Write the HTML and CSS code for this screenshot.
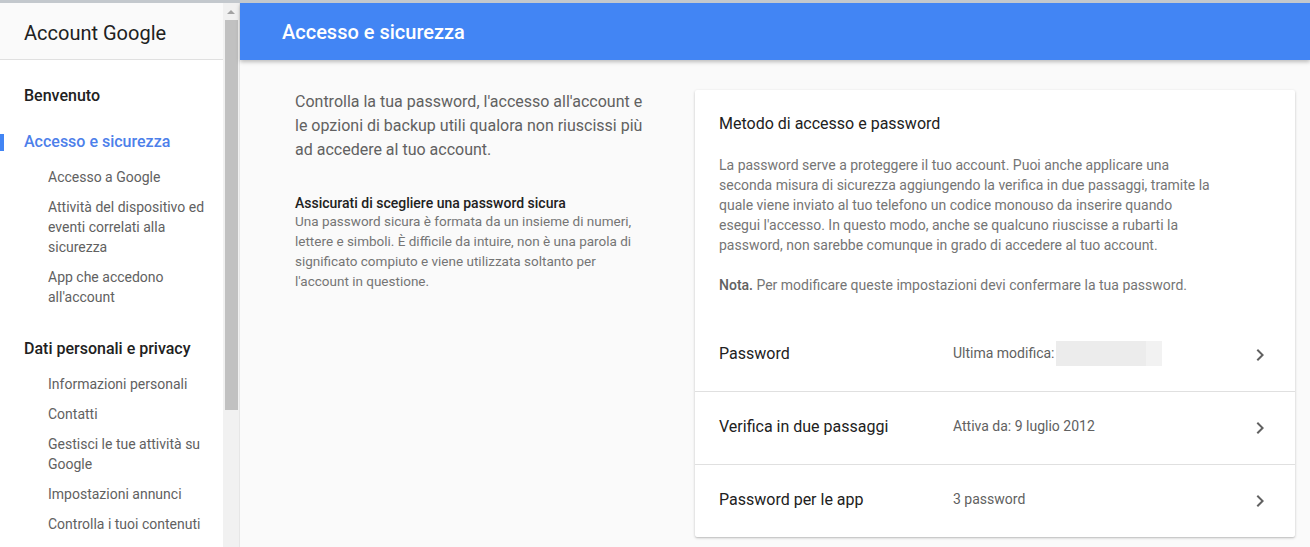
FILE: index.html
```html
<!DOCTYPE html>
<html lang="it">
<head>
<meta charset="utf-8">
<title>Account Google - Accesso e sicurezza</title>
<link rel="stylesheet" href="styles.css">
</head>
<body>
<div class="page">
  <aside class="sidebar">
    <div class="brand">Account Google</div>
    <nav class="nav">
      <div class="section">
        <a class="section-title">Benvenuto</a>
      </div>
      <div class="section">
        <a class="section-title active">Accesso e sicurezza</a>
        <ul class="sub">
          <li>Accesso a Google</li>
          <li>Attività del dispositivo ed eventi correlati alla sicurezza</li>
          <li>App che accedono all'account</li>
        </ul>
      </div>
      <div class="section">
        <a class="section-title">Dati personali e privacy</a>
        <ul class="sub">
          <li>Informazioni personali</li>
          <li>Contatti</li>
          <li>Gestisci le tue attività su Google</li>
          <li>Impostazioni annunci</li>
          <li>Controlla i tuoi contenuti</li>
        </ul>
      </div>
    </nav>
  </aside>
  <div class="scrollbar">
    <div class="arrow"></div>
    <div class="thumb"></div>
  </div>
  <main class="main">
    <header class="topbar"><h1>Accesso e sicurezza</h1></header>
    <div class="content">
      <section class="intro">
        <p class="lead">Controlla la tua password, l'accesso all'account e le opzioni di backup utili qualora non riuscissi più ad accedere al tuo account.</p>
        <h3 class="tip-title">Assicurati di scegliere una password sicura</h3>
        <p class="tip">Una password sicura è formata da un insieme di numeri, lettere e simboli. È difficile da intuire, non è una parola di significato compiuto e viene utilizzata soltanto per l'account in questione.</p>
      </section>
      <section class="card">
        <div class="card-head">
          <h2>Metodo di accesso e password</h2>
          <p class="desc">La password serve a proteggere il tuo account. Puoi anche applicare una seconda misura di sicurezza aggiungendo la verifica in due passaggi, tramite la quale viene inviato al tuo telefono un codice monouso da inserire quando esegui l'accesso. In questo modo, anche se qualcuno riuscisse a rubarti la password, non sarebbe comunque in grado di accedere al tuo account.</p>
          <p class="desc"><b>Nota.</b> Per modificare queste impostazioni devi confermare la tua password.</p>
        </div>
        <div class="row">
          <span class="label">Password</span>
          <span class="value">Ultima modifica:<span class="redacted"></span></span>
          <svg class="chev" viewBox="0 0 24 24" width="24" height="24"><path d="M10 6L8.59 7.41 13.17 12l-4.58 4.59L10 18l6-6z"/></svg>
        </div>
        <div class="row">
          <span class="label">Verifica in due passaggi</span>
          <span class="value">Attiva da: 9 luglio 2012</span>
          <svg class="chev" viewBox="0 0 24 24" width="24" height="24"><path d="M10 6L8.59 7.41 13.17 12l-4.58 4.59L10 18l6-6z"/></svg>
        </div>
        <div class="row">
          <span class="label">Password per le app</span>
          <span class="value">3 password</span>
          <svg class="chev" viewBox="0 0 24 24" width="24" height="24"><path d="M10 6L8.59 7.41 13.17 12l-4.58 4.59L10 18l6-6z"/></svg>
        </div>
      </section>
    </div>
  </main>
</div>
</body>
</html>
```

FILE: styles.css
```css
* { box-sizing: border-box; }
html, body {
  margin: 0;
  padding: 0;
  height: 547px;
  overflow: hidden;
  font-family: Roboto, "Liberation Sans", Arial, sans-serif;
}
body {
  border-top: 3px solid #c3c8cd;
  background: #fafafa;
}
.page {
  display: flex;
  height: 544px;
}
.sidebar {
  width: 223px;
  flex: 0 0 223px;
  background: #fff;
  overflow: hidden;
}
.brand {
  height: 57px;
  border-bottom: 1px solid #e0e0e0;
  background: #fafafa;
  padding: 18px 0 0 24px;
  font-size: 20px;
  line-height: 24px;
  color: #212121;
}
.nav { padding-top: 24px; }
.section { margin-bottom: 22px; }
.section-title {
  display: block;
  position: relative;
  padding-left: 24px;
  font-size: 16px;
  line-height: 24px;
  font-weight: 500;
  color: #212121;
}
.section-title.active { color: #4d80ea; }
.section-title.active::before {
  content: "";
  position: absolute;
  left: 0;
  top: 4px;
  width: 4px;
  height: 17px;
  background: #4285f4;
}
.sub {
  list-style: none;
  margin: 13px 0 0;
  padding: 0 0 8px 48px;
}
.sub li {
  font-size: 14px;
  line-height: 20px;
  color: #616161;
  margin-bottom: 10px;
  padding-right: 8px;
}
.sub li:last-child { margin-bottom: 0; }
.scrollbar {
  flex: 0 0 17px;
  background: #f1f1f1;
  border-right: 1px solid #e6e6e6;
  display: flex;
  flex-direction: column;
  align-items: center;
}
.arrow {
  width: 0;
  height: 0;
  margin-top: 7px;
  border-left: 4px solid transparent;
  border-right: 4px solid transparent;
  border-bottom: 4px solid #a3a3a3;
}
.thumb {
  margin-top: 6px;
  width: 13px;
  height: 390px;
  background: #c1c1c1;
}
.main {
  flex: 1;
  display: flex;
  flex-direction: column;
  min-width: 0;
}
.topbar {
  height: 57px;
  background: #4285f4;
  box-shadow: 0 2px 4px rgba(0,0,0,0.25);
  padding-left: 42px;
  position: relative;
  z-index: 1;
}
.topbar h1 {
  margin: 0;
  padding-top: 1px;
  font-size: 20px;
  line-height: 56px;
  font-weight: 500;
  color: #fff;
}
.content {
  display: flex;
  padding: 30px 16px 0 55px;
  gap: 48px;
}
.intro { flex: 0 0 352px; }
.lead {
  margin: 0;
  font-size: 16px;
  line-height: 24px;
  color: #616161;
}
.tip-title {
  margin: 31px 0 0;
  font-size: 14px;
  line-height: 20px;
  font-weight: 500;
  color: #212121;
}
.tip {
  margin: -2px 0 0;
  font-size: 13.5px;
  line-height: 20px;
  color: #757575;
}
.card {
  flex: 0 0 600px;
  background: #fff;
  box-shadow: 0 1px 3px rgba(0,0,0,0.2), 0 1px 1px rgba(0,0,0,0.08);
  border-radius: 2px;
}
.card-head { padding: 24px 24px 24px; }
.card-head h2 {
  margin: 0 0 21px;
  font-size: 16px;
  line-height: 20px;
  font-weight: 400;
  color: #212121;
}
.desc {
  margin: 0 0 20px;
  max-width: 495px;
  font-size: 14px;
  line-height: 20px;
  color: #757575;
}
.desc:last-child { margin-bottom: 0; }
.desc b { font-weight: 500; color: #616161; }
.row {
  display: flex;
  align-items: center;
  height: 73px;
  padding: 0 23px 4px 24px;
  border-bottom: 1px solid #e0e0e0;
}
.row:last-child { border-bottom: none; height: 72px; }
.label {
  flex: 0 0 234px;
  font-size: 16px;
  color: #212121;
}
.value {
  flex: 1;
  display: flex;
  align-items: center;
  font-size: 14px;
  color: #616161;
}
.redacted {
  display: inline-block;
  width: 106px;
  height: 25px;
  background: linear-gradient(to right, #ececec 85%, #f2f2f2 85%);
  margin-left: 1px;
}
.chev { fill: #616161; flex: 0 0 24px; margin-top: 4px; }
```
